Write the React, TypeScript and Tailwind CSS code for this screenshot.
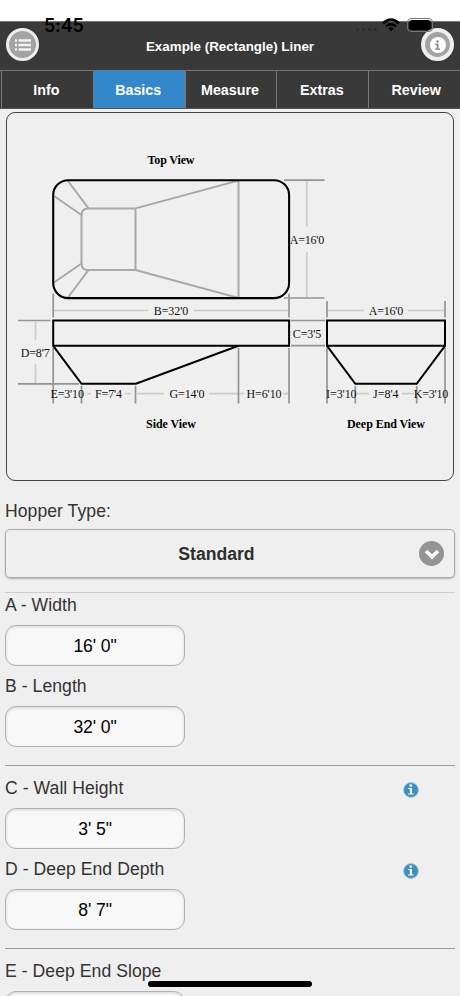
import clsx from 'clsx'

const TABS = ['Info', 'Basics', 'Measure', 'Extras', 'Review']

const TITLES = [
  { text: 'Top View', x: 171, y: 164, width: 47 },
  { text: 'Side View', x: 171, y: 428, width: 50 },
  { text: 'Deep End View', x: 386, y: 428, width: 78 },
]

const DIMENSIONS = [
  { text: "A=16'0", x: 307, y: 244, width: 34.5 },
  { text: "B=32'0", x: 171, y: 315, width: 34.5 },
  { text: "C=3'5", x: 307, y: 337.5, width: 28.5 },
  { text: "D=8'7", x: 35.2, y: 356.7, width: 29 },
  { text: "E=3'10", x: 67.2, y: 398.3, width: 33.5 },
  { text: "F=7'4", x: 108.5, y: 398.3, width: 27 },
  { text: "G=14'0", x: 187, y: 398.3, width: 35 },
  { text: "H=6'10", x: 264, y: 398.3, width: 35 },
  { text: "A=16'0", x: 386, y: 315, width: 34.5 },
  { text: "I=3'10", x: 341.3, y: 398.3, width: 30.5 },
  { text: "J=8'4", x: 385.8, y: 398.3, width: 25.5 },
  { text: "K=3'10", x: 431, y: 398.3, width: 34.5 },
]

const PoolDiagram = () => (
  <svg viewBox="7 113 446 367" className="block h-full w-full" fill="none">
    {/* dimension lines */}
    <path
      stroke="#cbcbcb"
      strokeWidth="1.7"
      d="M306.8 181V226.5M306.8 252V297M54 310.5H148.5M194 310.5H289M35.5 322V340M35.5 364V383M87 393.7H91M125 393.7H131M137 393.7H164M209 393.7H244M283 393.7H288M327 310.5H364M408 310.5H445M357 393.7H369M402 393.7H414"
    />
    {/* extension lines */}
    <path
      stroke="#949494"
      strokeWidth="1.7"
      d="M284 180.2H324.5M284 298H324.5M53.2 293.5V317.5M289 293.5V317.5M18 320.5H50.5M18 383.8H79M291 320.5H325M291 345.7H325M53.2 348V403.5M81.5 386V403.5M135.5 386V403.5M238.5 348V403.5M289 348V403.5M327 301V317.5M445 301V317.5M327 348V403.5M355.3 386V403.5M416.7 386V403.5M445 348V403.5"
    />
    {/* hopper seen from above */}
    <path
      stroke="#a8a8a8"
      strokeWidth="2"
      d="M88 208.4H135.5V270H88Q81.5 270 81.5 263V215.5Q81.5 208.4 88 208.4ZM68 181L88.5 208.4M54 196L81.5 215M54 282.5L81.5 263.5M68 297.5L88.5 270M135.5 208.4L238.5 180.5V298L135.5 270"
    />
    <rect x="53.2" y="180.2" width="235.9" height="117.9" rx="15" stroke="#000" strokeWidth="2.1" />
    <path
      stroke="#000"
      strokeWidth="2"
      d="M53.2 320.4H289.1V345.8H53.2ZM53.2 345.8L81.5 383.8H136L238.5 345.8M327 320.4H445V345.8H327ZM327 345.8L355.3 383.8H416.7L445 345.8"
    />
    <g fill="#000" textAnchor="middle" className="font-['Liberation_Serif',serif] text-[12px]">
      {DIMENSIONS.map(({ text, x, y, width }) => (
        <text key={text + x} x={x} y={y} textLength={width} fill="#111">
          {text}
        </text>
      ))}
      {TITLES.map(({ text, x, y, width }) => (
        <text key={text} x={x} y={y} textLength={width} className="font-bold">
          {text}
        </text>
      ))}
    </g>
  </svg>
)

const InfoGlyph = ({ className }: { className?: string }) => (
  <svg viewBox="0 0 10 14" className={className} fill="currentColor">
    <circle cx="4.8" cy="2" r="1.7" />
    <path d="M1.5 5H6.3V12H8.5V13.5H1.5V12H3.7V6.5H1.5Z" />
  </svg>
)

const StatusBar = () => (
  <div className="absolute inset-x-0 top-0 h-9 text-black">
    <span className="absolute left-[44px] top-[14px] font-['Inter',sans-serif] text-[18px] font-semibold leading-6 tracking-[-0.2px]">
      5:45
    </span>
    <div className="absolute left-[356px] top-[28px] flex gap-[3px]">
      {[0, 1, 2, 3].map(i => (
        <span key={i} className="size-[3px] rounded-full bg-[#2b2b2b]" />
      ))}
    </div>
    <svg viewBox="0 0 18 14" className="absolute left-[382px] top-[18px] h-[14px] w-[18px]" fill="none">
      <path d="M1 5.2Q9 -2 17 5.2" stroke="#000" strokeWidth="2.5" />
      <path d="M4 8.3Q9 4 14 8.3" stroke="#000" strokeWidth="2.4" />
      <path d="M9 13.2L6.2 10.4Q9 8.3 11.8 10.4Z" fill="#000" />
    </svg>
    <div className="absolute left-[407px] top-[18px] h-[14px] w-[26px] rounded-[4px] border border-[#777] p-px">
      <div className="h-full rounded-[3px] bg-black" />
    </div>
  </div>
)

const Header = () => (
  <header className="mt-[21px] flex h-[49px] items-center justify-between border-t border-[#777] bg-[#393939] px-[6px]">
    <button className="mb-[3px] flex size-[33px] items-center justify-center rounded-full border-[3.5px] border-[#eee] bg-[#a3a3a3]">
      <svg viewBox="0 0 18 14" className="h-[14px] w-[18px] shrink-0" stroke="#f4f4f4" strokeWidth="2.3">
        <path d="M1 2.5H3M1 7H3M1 11.5H3M4.5 2.5H17M4.5 7H17M4.5 11.5H17" />
      </svg>
    </button>
    <h1 className="pt-[2px] text-[13.4px] font-bold text-white">Example (Rectangle) Liner</h1>
    <button className="mb-[3px] flex size-[33px] items-center justify-center rounded-full border-4 border-[#eee] bg-[#a3a3a3]">
      <span className="flex size-[16px] items-center justify-center rounded-full bg-white">
        <InfoGlyph className="h-[10px] text-[#858585]" />
      </span>
    </button>
  </header>
)

const Tabs = () => (
  <nav className="flex h-[39px] border-y border-t-[#777] border-b-[#555] bg-[#393939] pl-px">
    {TABS.map(tab => (
      <button
        key={tab}
        className={clsx(
          'w-[91.8px] shrink-0 border-l border-[#777] pr-[2px] pt-[3px] text-[14.3px] font-bold text-white last:w-[95px] last:pr-0',
          tab === 'Basics' && 'bg-[#3388cc]',
        )}
      >
        {tab}
      </button>
    ))}
  </nav>
)

interface FieldProps {
  label: string
  value: string
  info?: boolean
}
const Field = ({ label, value, info = false }: FieldProps) => (
  <div className="h-[81.3px]">
    <div className="flex h-[22px] items-center justify-between pr-9">
      <label className="text-[17.6px] leading-[22px] tracking-[0.05px]">{label}</label>
      {info && (
        <span className="mt-[3px] flex size-4 items-center justify-center rounded-full border border-[#a9cde1] bg-[#408fbe]">
          <InfoGlyph className="h-[11px] text-white" />
        </span>
      )}
    </div>
    <div className="mt-[8.5px] flex h-[41px] w-[180px] items-center justify-center rounded-[11px] border-[1.5px] border-[#b0b0b0] bg-[#f8f8f8] pt-[2px] text-[17.6px] tracking-[-0.1px] text-black shadow-[inset_0_1px_3px_rgba(0,0,0,0.14)]">
      {value}
    </div>
  </div>
)

const App = () => (
  <div className="relative flex h-[996px] w-[460px] flex-col overflow-hidden bg-white font-['Liberation_Sans',Arial,sans-serif] text-[#333]">
    <Header />
    <Tabs />
    <main className="flex-1 overflow-hidden bg-[#efefef] pl-[5px] pr-[5px] pt-[3px]">
      <section className="ml-px h-[369px] w-[448px] rounded-[9px] border border-[#444]">
        <PoolDiagram />
      </section>

      <div className="mt-[19px] text-[17.6px] leading-[22px] tracking-[0.05px]">Hopper Type:</div>
      <button className="mt-[7px] flex h-[49px] w-[450px] items-center rounded-[5px] border border-[#aaa] pl-[8px] pr-[10px] shadow-[0_1px_2px_rgba(0,0,0,0.25)]">
        <span className="flex-1 pt-[2px] text-center text-[17.6px] font-bold text-[#2f2f2f]">Standard</span>
        <span className="flex size-[25px] items-center justify-center rounded-full bg-[#949494]">
          <svg viewBox="0 0 16 12" className="w-4" fill="none" stroke="#fff" strokeWidth="3.5">
            <path d="M2 3L8 9L14 3" />
          </svg>
        </span>
      </button>

      <hr className="mb-px mt-[14px] border-[#ccc]" />
      <Field label="A - Width" value={'16\' 0"'} />
      <Field label="B - Length" value={'32\' 0"'} />
      <hr className="mb-[11.5px] mt-[8px] border-[#999]" />
      <Field label="C - Wall Height" value={'3\' 5"'} info />
      <Field label="D - Deep End Depth" value={'8\' 7"'} info />
      <hr className="mb-[11.5px] mt-[8px] border-[#999]" />
      <Field label="E - Deep End Slope" value="" />
    </main>
    <StatusBar />
    <div className="absolute bottom-[9px] left-[148px] h-[6px] w-[164px] rounded-full bg-black" />
  </div>
)

export default App
